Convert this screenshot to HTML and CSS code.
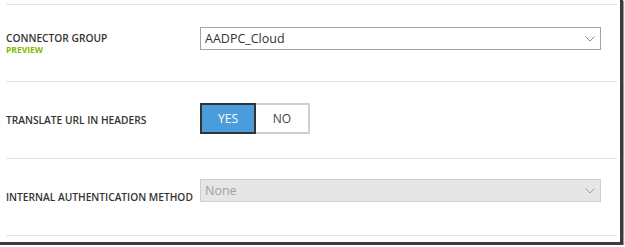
FILE: index.html
```html
<!DOCTYPE html>
<html>
<head>
<meta charset="utf-8">
<link rel="stylesheet" href="styles.css">
</head>
<body>
<div class="panel">
  <div class="list">
    <div class="row">
      <div class="label">
        <div class="name">CONNECTOR GROUP</div>
        <div class="preview">PREVIEW</div>
      </div>
      <div class="control">
        <div class="select">
          <span class="value">AADPC_Cloud</span>
          <svg class="chev" width="10" height="6" viewBox="0 0 10 6"><path d="M0.5 0.5 L5 5 L9.5 0.5" fill="none" stroke="#8a8a8a" stroke-width="1"/></svg>
        </div>
      </div>
    </div>
    <div class="row">
      <div class="label"><div class="name">TRANSLATE URL IN HEADERS</div></div>
      <div class="control">
        <div class="toggle">
          <div class="opt yes">YES</div>
          <div class="opt no">NO</div>
        </div>
      </div>
    </div>
    <div class="row">
      <div class="label"><div class="name">INTERNAL AUTHENTICATION METHOD</div></div>
      <div class="control">
        <div class="select disabled">
          <span class="value">None</span>
          <svg class="chev" width="10" height="6" viewBox="0 0 10 6"><path d="M0.5 0.5 L5 5 L9.5 0.5" fill="none" stroke="#9a9a9a" stroke-width="1"/></svg>
        </div>
      </div>
    </div>
  </div>
</div>
</body>
</html>
```
FILE: styles.css
```css
html, body {
  margin: 0;
  padding: 0;
  background: #ffffff;
}
body {
  font-family: "Open Sans", "Noto Sans", sans-serif;
  color: #333;
}
.panel {
  width: 611px;
  height: 238px;
  padding: 4px 3px 0 6px;
  border-right: 3px solid #3c3c3c;
  border-bottom: 3px solid #3c3c3c;
  box-shadow: 1px 1px 1px #9a9a9a;
  background: #fff;
}
.list {
  border-top: 1px solid #e2e2e2;
}
.row {
  display: flex;
  align-items: center;
  height: 76px;
  border-bottom: 1px solid #e2e2e2;
}
.label {
  width: 194px;
  flex: none;
}
.name {
  font-size: 10.2px;
  font-weight: 600;
  color: #333;
  line-height: 12px;
}
.preview {
  font-size: 8.5px;
  font-weight: 700;
  color: #7fba00;
  line-height: 11px;
}
.control {
  flex: 1;
  align-self: flex-start;
  margin-top: 22px;
}
.row:nth-child(2) .control { margin-top: 21px; }
.row:nth-child(3) .control { margin-top: 20px; }
.select {
  height: 21px;
  border: 1px solid #a3a3a3;
  display: flex;
  align-items: center;
  justify-content: space-between;
  padding: 0 5px 0 4px;
  width: 390px;
}
.select .value {
  font-size: 12.5px;
  color: #333;
}
.select.disabled {
  background: #e6e6e6;
  border-color: #cfcfcf;
}
.select.disabled .value {
  color: #a0a0a0;
}
.toggle {
  display: flex;
  height: 31px;
}
.opt {
  display: flex;
  align-items: center;
  justify-content: center;
  font-size: 12px;
  box-sizing: border-box;
  height: 31px;
}
.yes {
  width: 56px;
  background: #4b9cda;
  color: #fff;
  border: 2px solid #333;
}
.no {
  width: 54px;
  background: #fff;
  color: #444;
  border: 2px solid #d0d0d0;
  border-left: none;
}
```
